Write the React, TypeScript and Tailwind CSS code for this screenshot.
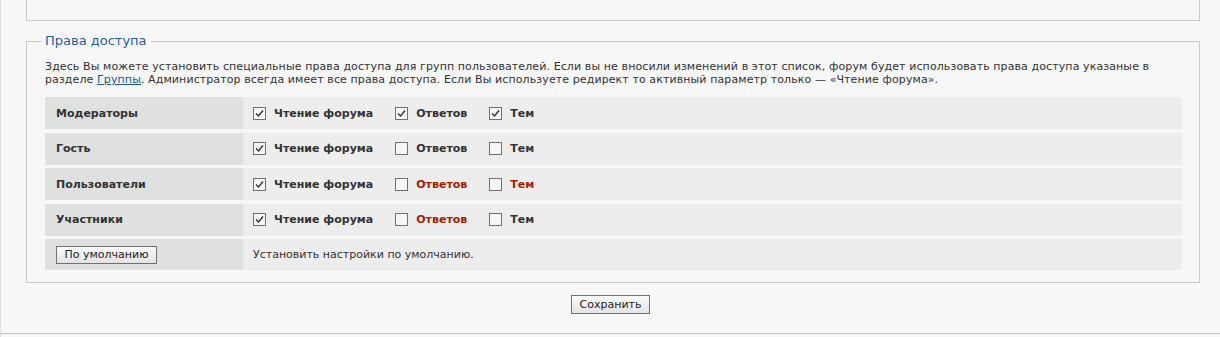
const rows: { name: string; perms: { label: string; checked: boolean; red?: boolean }[] }[] = [
  {
    name: "Модераторы",
    perms: [
      { label: "Чтение форума", checked: true },
      { label: "Ответов", checked: true },
      { label: "Тем", checked: true },
    ],
  },
  {
    name: "Гость",
    perms: [
      { label: "Чтение форума", checked: true },
      { label: "Ответов", checked: false },
      { label: "Тем", checked: false },
    ],
  },
  {
    name: "Пользователи",
    perms: [
      { label: "Чтение форума", checked: true },
      { label: "Ответов", checked: false, red: true },
      { label: "Тем", checked: false, red: true },
    ],
  },
  {
    name: "Участники",
    perms: [
      { label: "Чтение форума", checked: true },
      { label: "Ответов", checked: false, red: true },
      { label: "Тем", checked: false },
    ],
  },
];

function Box({ checked }: { checked: boolean }) {
  return (
    <span className="flex h-[13px] w-[13px] shrink-0 items-center justify-center border border-[#707070] bg-[#f6f6f6]">
      {checked ? (
        <svg width="9" height="9" viewBox="0 0 9 9">
          <path d="M1 4.5 L3.5 7 L8 1.5" fill="none" stroke="#333" strokeWidth="1.4" />
        </svg>
      ) : null}
    </span>
  );
}

function Perm({ label, checked, red }: { label: string; checked: boolean; red?: boolean }) {
  return (
    <label className="mr-[22px] flex items-center gap-[8px]">
      <Box checked={checked} />
      <span className={red ? "font-bold text-[#a81d02]" : "font-bold text-[#333]"}>{label}</span>
    </label>
  );
}

export default function App() {
  return (
    <div className="h-[337px] w-full border-l border-[#e2e2e2] bg-[#f7f7f7] text-[11px] leading-[13px] text-[#333] [font-family:'DejaVu_Sans',Verdana,sans-serif]">
      <div className="ml-[25px] h-[21px] w-[1174px] border-x border-b border-[#c9c9c9]" />

      <fieldset className="mx-0 ml-[25px] mt-[12px] w-[1174px] border border-[#c9c9c9] pb-[12px] pl-[18px] pr-[17px] pt-[11px]">
        <legend className="ml-[-4px] px-[4px] text-[13px] leading-[16px] text-[#1c5ea8]">Права доступа</legend>
        <p className="whitespace-nowrap tracking-[0.1px]">
          Здесь Вы можете установить специальные права доступа для групп пользователей. Если вы не вносили изменений в этот список, форум будет использовать права доступа указаные в
          <br />
          разделе <a className="text-[#105a9e] underline">Группы</a>. Администратор всегда имеет все права доступа. Если Вы используете редирект то активный параметр только — «Чтение форума».
        </p>

        <div className="mt-[11px] flex flex-col gap-[3.5px]">
          {rows.map((r) => (
            <div key={r.name} className="grid h-[32px] grid-cols-[198px_1fr]">
              <div className="flex items-center bg-[#dfe0e0] pl-[11px] font-bold">{r.name}</div>
              <div className="flex items-center bg-[#ededed] pl-[10px]">
                {r.perms.map((p) => (
                  <Perm key={p.label} {...p} />
                ))}
              </div>
            </div>
          ))}
          <div className="grid h-[31px] grid-cols-[198px_1fr]">
            <div className="flex items-center bg-[#dfe0e0] pl-[11px]">
              <button className="h-[18px] w-[101px] border border-[#707070] bg-gradient-to-b from-[#fbfbfb] to-[#e3e3e3] text-[11px] text-[#222]">
                По умолчанию
              </button>
            </div>
            <div className="flex items-center bg-[#ededed] pl-[10px]">Установить настройки по умолчанию.</div>
          </div>
        </div>
      </fieldset>

      <div className="mt-[12px] flex justify-center">
        <button className="h-[19px] w-[79px] border border-[#707070] bg-gradient-to-b from-[#fbfbfb] to-[#e3e3e3] text-[11px] text-[#222]">
          Сохранить
        </button>
      </div>
      <div className="mt-[19px] border-b border-[#c4c4c4]" />
    </div>
  );
}
